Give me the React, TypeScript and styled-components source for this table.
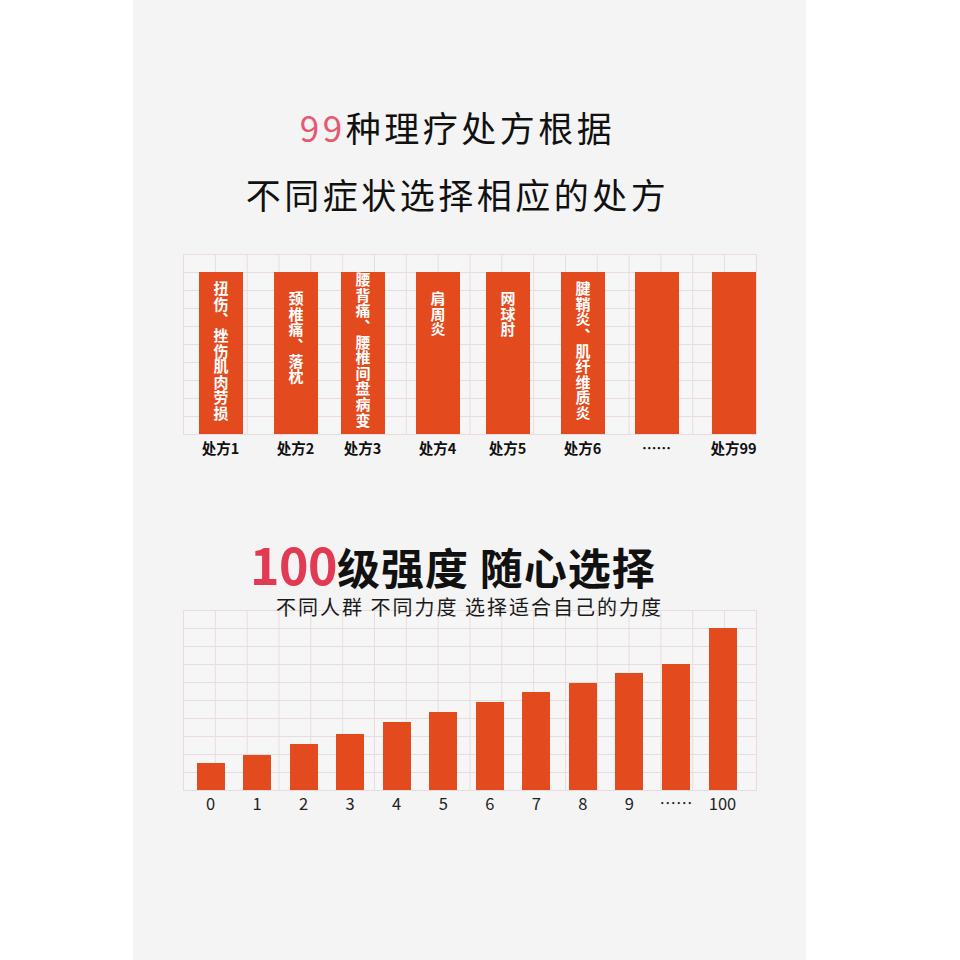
import React from "react";
import styled, { createGlobalStyle } from "styled-components";

const GlobalStyle = createGlobalStyle`
  html, body { margin: 0; padding: 0; background: #ffffff; }
  body { font-family: "Noto Sans CJK SC", "Noto Sans", sans-serif; }
  * { box-sizing: border-box; }
`;

const Page = styled.div`
  width: 960px;
  min-height: 960px;
  padding-left: 133px;
  display: flex;
`;

const Panel = styled.main`
  width: 673px;
  min-height: 960px;
  background: #f4f4f4;
  display: flex;
  flex-direction: column;
  align-items: center;
  padding-top: 93px;
`;

const Title = styled.h1`
  margin: 0 24px 0 0;
  font-weight: 400;
  font-size: 35px;
  line-height: 67px;
  letter-spacing: 3.5px;
  color: #111111;
  text-align: center;
`;

const TitleLine = styled.div``;

const Accent = styled.span`
  color: #e65a70;
`;

const Plot = styled.div<{ $mt: number }>`
  margin-top: ${(p) => p.$mt}px;
  width: 574px;
  height: 181px;
  flex-shrink: 0;
  border-right: 1px solid #eadcdc;
  border-bottom: 1px solid #eadcdc;
  background-color: #f7f6f6;
  background-image: linear-gradient(to right, #eadcdc 1px, transparent 1px),
    linear-gradient(to bottom, #eadcdc 1px, transparent 1px);
  background-size: calc(100% / 18) calc(100% / 10);
  display: flex;
  align-items: flex-end;
  position: relative;
  z-index: 0;
`;

const Row = styled.div<{ $pl?: number; $gap?: number }>`
  display: flex;
  align-items: flex-end;
  height: 100%;
  padding-left: ${(p) => p.$pl ?? 0}px;
  gap: ${(p) => p.$gap ?? 0}px;
`;

const LabelRow = styled.div<{ $pl?: number; $gap?: number }>`
  width: 574px;
  height: 26px;
  display: flex;
  padding-left: ${(p) => p.$pl ?? 0}px;
  gap: ${(p) => p.$gap ?? 0}px;
`;

const PrescriptionBar = styled.div<{ $ml: number; $pt: number }>`
  flex-shrink: 0;
  margin-left: ${(p) => p.$ml}px;
  width: 44px;
  height: 162px;
  background: #e34a1e;
  padding-top: ${(p) => p.$pt}px;
  display: flex;
  flex-direction: column;
  align-items: center;
  overflow: hidden;
`;

const BarText = styled.span`
  writing-mode: vertical-rl;
  text-orientation: upright;
  color: #ffffff;
  font-weight: 700;
  font-size: 15px;
  line-height: 16px;
  letter-spacing: 0.6px;
`;

const PrescriptionLabel = styled.div<{ $ml: number }>`
  flex-shrink: 0;
  margin-left: ${(p) => p.$ml}px;
  width: 44px;
  display: flex;
  justify-content: center;
  white-space: nowrap;
  font-weight: 700;
  font-size: 14.5px;
  line-height: 26px;
  color: #111111;
`;

const Heading = styled.h2`
  margin: 77px 33px 0 0;
  height: 50px;
  font-weight: 700;
  font-size: 43px;
  line-height: 50px;
  letter-spacing: 1px;
  color: #111111;
  text-align: center;
  white-space: nowrap;
`;

const BigNumber = styled.span`
  font-size: 50px;
  line-height: 1;
  letter-spacing: -0.5px;
  color: #e23a53;
`;

const Subtitle = styled.p`
  position: relative;
  z-index: 1;
  margin: 7px 0 -9px 0;
  font-weight: 400;
  font-size: 20px;
  line-height: 24px;
  letter-spacing: 2px;
  color: #1a1a1a;
  white-space: pre;
`;

const LevelBar = styled.div`
  flex-shrink: 0;
  width: 28px;
  background: #e34a1e;
`;

const LevelLabel = styled.div`
  flex-shrink: 0;
  width: 28px;
  display: flex;
  justify-content: center;
  white-space: nowrap;
  font-size: 16.5px;
  line-height: 24px;
  color: #222222;
`;

const prescriptions = [
  { label: "处方1", text: "扭伤、挫伤肌肉劳损", pad: 9, gap: 16 },
  { label: "处方2", text: "颈椎痛、落枕", pad: 19, gap: 31 },
  { label: "处方3", text: "腰背痛、腰椎间盘病变", pad: 0, gap: 23 },
  { label: "处方4", text: "肩周炎", pad: 19, gap: 31 },
  { label: "处方5", text: "网球肘", pad: 19, gap: 26 },
  { label: "处方6", text: "腱鞘炎、肌纤维质炎", pad: 9, gap: 31 },
  { label: "……", text: "", pad: 0, gap: 30 },
  { label: "处方99", text: "", pad: 0, gap: 33 },
];

const levels = [
  { label: "0", h: 27 },
  { label: "1", h: 35 },
  { label: "2", h: 46 },
  { label: "3", h: 56 },
  { label: "4", h: 68 },
  { label: "5", h: 78 },
  { label: "6", h: 88 },
  { label: "7", h: 98 },
  { label: "8", h: 107 },
  { label: "9", h: 117 },
  { label: "……", h: 126 },
  { label: "100", h: 162 },
];

export default function App() {
  return (
    <>
      <GlobalStyle />
      <Page>
        <Panel>
          <Title>
            <TitleLine>
              <Accent>99</Accent>种理疗处方根据
            </TitleLine>
            <TitleLine>不同症状选择相应的处方</TitleLine>
          </Title>

          <Plot $mt={27}>
            <Row>
              {prescriptions.map((p) => (
                <PrescriptionBar key={p.label} $ml={p.gap} $pt={p.pad}>
                  {p.text && <BarText>{p.text}</BarText>}
                </PrescriptionBar>
              ))}
            </Row>
          </Plot>
          <LabelRow>
            {prescriptions.map((p) => (
              <PrescriptionLabel key={p.label} $ml={p.gap}>
                {p.label}
              </PrescriptionLabel>
            ))}
          </LabelRow>

          <Heading>
            <BigNumber>100</BigNumber>级强度 随心选择
          </Heading>
          <Subtitle>不同人群 不同力度 选择适合自己的力度</Subtitle>

          <Plot $mt={0}>
            <Row $pl={14} $gap={18.55}>
              {levels.map((l) => (
                <LevelBar key={l.label} style={{ height: `${l.h}px` }} />
              ))}
            </Row>
          </Plot>
          <LabelRow $pl={14} $gap={18.55}>
            {levels.map((l) => (
              <LevelLabel key={l.label}>{l.label}</LevelLabel>
            ))}
          </LabelRow>
        </Panel>
      </Page>
    </>
  );
}
